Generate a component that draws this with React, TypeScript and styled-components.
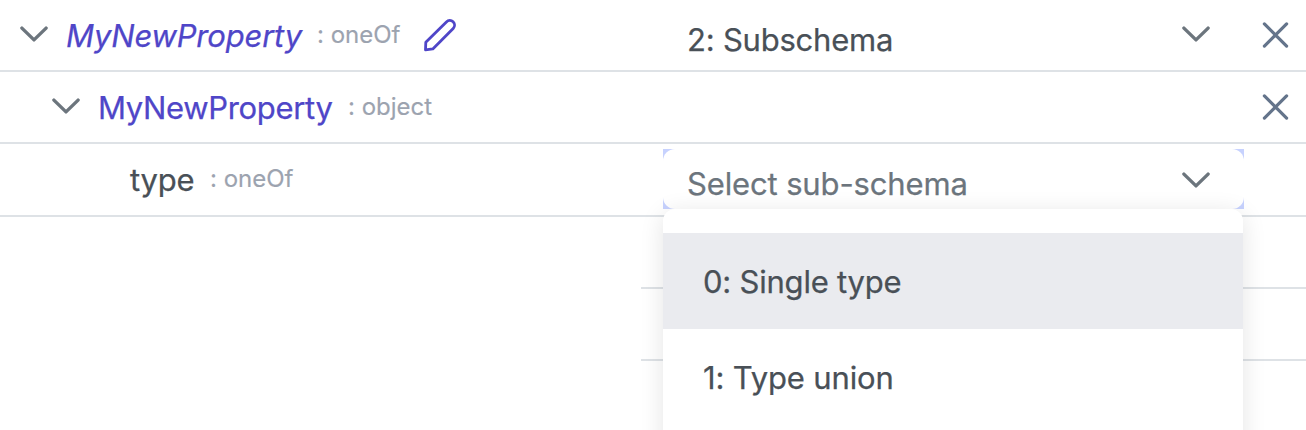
import React from "react";
import styled, { createGlobalStyle } from "styled-components";

const Global = createGlobalStyle`
  *, *::before, *::after { box-sizing: border-box; }
  body {
    margin: 0;
    background: #fff;
    overflow: hidden;
    font-family: Inter, "Liberation Sans", sans-serif;
    font-size: 31px;
    color: #495057;
    -webkit-text-stroke: 0.25px currentColor;
  }
`;

const Page = styled.div`
  width: 1306px;
  height: 430px;
  overflow: hidden;
  display: flex;
  flex-direction: column;
`;

const Row = styled.div<{ $height?: number }>`
  display: flex;
  flex: none;
  height: ${(p) => p.$height ?? 72}px;
  border-bottom: 2px solid #dee2e6;
`;

const EmptyRow = styled(Row)`
  margin-left: 641px;
`;

const NameCell = styled.div<{ $indent: number }>`
  display: flex;
  flex: none;
  width: 663px;
  height: 70px;
  padding-left: ${(p) => p.$indent}px;
  align-items: center;
`;

const Toggle = styled.span`
  display: flex;
  width: 28px;
  margin-right: 18px;
  padding-bottom: 2px;
`;

const Name = styled.span<{ $width: number; $italic?: boolean; $link?: boolean; $spacing?: number }>`
  width: ${(p) => p.$width}px;
  line-height: 40px;
  padding-top: 2px;
  white-space: nowrap;
  letter-spacing: ${(p) => p.$spacing ?? 0}px;
  font-style: ${(p) => (p.$italic ? "italic" : "normal")};
  color: ${(p) => (p.$link ? "#4f46c8" : "#495057")};
`;

const TypeLabel = styled.span<{ $width?: number }>`
  width: ${(p) => (p.$width ? `${p.$width}px` : "auto")};
  font-size: 24px;
  line-height: 30px;
  white-space: nowrap;
  color: #9ca3af;
  -webkit-text-stroke-width: 0.15px;
`;

const ValueCell = styled.div`
  width: 581px;
  flex: none;
`;

const Select = styled.div<{ $offset: number; $muted?: boolean; $focused?: boolean }>`
  display: flex;
  align-items: center;
  justify-content: space-between;
  height: 60px;
  margin-top: ${(p) => p.$offset}px;
  padding: 0 34px 0 24px;
  color: ${(p) => (p.$muted ? "#6c757d" : "#495057")};
  background: ${(p) => (p.$focused ? "#c7d2fe" : "#fff")};
  position: relative;
  z-index: 0;

  &::before {
    content: "";
    position: absolute;
    inset: 0;
    z-index: -1;
    border-radius: 12px;
    background: #fff;
  }
`;

const SelectText = styled.span<{ $spacing?: number; $drop: number }>`
  line-height: 40px;
  padding-top: ${(p) => p.$drop}px;
  letter-spacing: ${(p) => p.$spacing ?? 0}px;
`;

const SelectIcon = styled.span<{ $drop: number }>`
  display: flex;
  padding-top: ${(p) => p.$drop}px;
`;

const ActionCell = styled.div`
  display: flex;
  align-items: center;
  height: 70px;
  padding-left: 17px;
`;

const MenuAnchor = styled.div`
  position: relative;
  z-index: 2;
`;

const Menu = styled.div`
  position: absolute;
  top: 0;
  left: 0;
  width: 580px;
  height: 260px;
  padding-top: 24px;
  border-radius: 12px;
  background: #fff;
  box-shadow: 0 4px 24px rgba(0, 0, 0, 0.11);
`;

const Option = styled.div<{ $active?: boolean; $spacing?: number }>`
  height: 96px;
  padding: 2px 40px 0;
  line-height: 94px;
  letter-spacing: ${(p) => p.$spacing ?? 0}px;
  background: ${(p) => (p.$active ? "#eaebef" : "#fff")};
`;

const Chevron = () => (
  <svg width="28" height="16" viewBox="0 0 28 16" fill="none">
    <path d="M1.9 2.1 14 13.9 26.1 2.1" stroke="#6c757d" strokeWidth="3.4" strokeLinecap="round" strokeLinejoin="round" />
  </svg>
);

const Pencil = () => (
  <svg width="34" height="34" viewBox="0 0 34 34" fill="none">
    <path
      d="M2.5 31.8 2.8 24.2 23.4 3.9a4.7 4.7 0 0 1 6.8 6.6L9.8 30.9Z"
      stroke="#4f46c8"
      strokeWidth="2.8"
      strokeLinejoin="round"
    />
  </svg>
);

const Close = () => (
  <svg width="28" height="28" viewBox="0 0 28 28" fill="none">
    <path d="M3.4 2.9 25.6 25.1M25.6 2.9 3.4 25.1" stroke="#64748b" strokeWidth="3.2" strokeLinecap="round" />
  </svg>
);

export default function App() {
  return (
    <>
      <Global />
      <Page>
        <Row>
          <NameCell $indent={20}>
            <Toggle><Chevron /></Toggle>
            <Name $width={251} $italic $link $spacing={-0.2}>MyNewProperty</Name>
            <TypeLabel $width={106}>: oneOf</TypeLabel>
            <Pencil />
          </NameCell>
          <ValueCell>
            <Select $offset={4}>
              <SelectText $drop={12} $spacing={-0.22}>2: Subschema</SelectText>
              <SelectIcon $drop={0}><Chevron /></SelectIcon>
            </Select>
          </ValueCell>
          <ActionCell><Close /></ActionCell>
        </Row>
        <Row>
          <NameCell $indent={52}>
            <Toggle><Chevron /></Toggle>
            <Name $width={250} $link $spacing={-0.34}>MyNewProperty</Name>
            <TypeLabel>: object</TypeLabel>
          </NameCell>
          <ValueCell />
          <ActionCell><Close /></ActionCell>
        </Row>
        <Row $height={73}>
          <NameCell $indent={130}>
            <Name $width={80} $spacing={-0.2}>type</Name>
            <TypeLabel>: oneOf</TypeLabel>
          </NameCell>
          <ValueCell>
            <Select $offset={5} $muted $focused>
              <SelectText $drop={10} $spacing={-0.14}>Select sub-schema</SelectText>
              <SelectIcon $drop={2}><Chevron /></SelectIcon>
            </Select>
            <MenuAnchor>
              <Menu>
                <Option $active $spacing={-0.22}>0: Single type</Option>
                <Option $spacing={-0.15}>1: Type union</Option>
              </Menu>
            </MenuAnchor>
          </ValueCell>
        </Row>
        <EmptyRow />
        <EmptyRow />
      </Page>
    </>
  );
}
